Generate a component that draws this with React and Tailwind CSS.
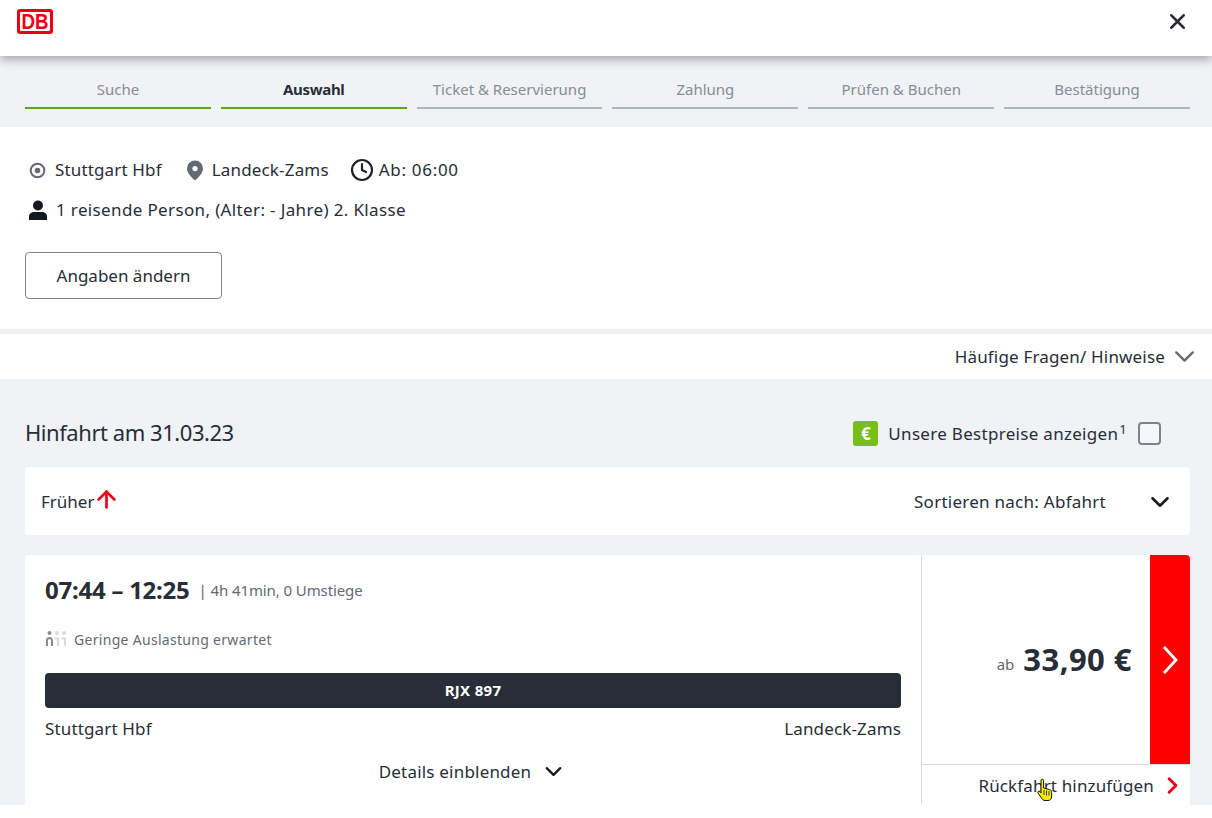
import { ChevronDown, ChevronRight, X, ArrowUp, Clock } from 'lucide-react'

const steps = [
  { label: 'Suche', done: true },
  { label: 'Auswahl', done: true, active: true },
  { label: 'Ticket & Reservierung' },
  { label: 'Zahlung' },
  { label: 'Prüfen & Buchen' },
  { label: 'Bestätigung' },
]

function DbLogo() {
  return (
    <div className="w-[36px] h-[25px] rounded-[3px] bg-[#ec0016] flex items-center justify-center">
      <div className="w-[30px] h-[19px] bg-white rounded-[1px] flex items-center justify-center">
        <span className="text-[#ec0016] font-bold text-[22px] leading-[19px] font-['Liberation_Sans',sans-serif] scale-x-[0.85]">DB</span>
      </div>
    </div>
  )
}

function Occupancy() {
  return (
    <svg width="22" height="18" viewBox="0 0 22 18">
      <circle cx="4.5" cy="3" r="2" fill="#878c96" />
      <path d="M1 16v-5.5a3.5 3.5 0 0 1 7 0V16H6v-5.5a1.5 1.5 0 0 0-3 0V16z" fill="#878c96" />
      <circle cx="12" cy="3" r="2" fill="#d7dce1" />
      <path d="M9.5 7.5h4.5V16h-2V9.5H9.5z" fill="#d7dce1" />
      <circle cx="19" cy="3" r="2" fill="#d7dce1" />
      <path d="M16.5 7.5H21V16h-2V9.5h-2.5z" fill="#d7dce1" />
    </svg>
  )
}

function Cursor() {
  return (
    <svg className="absolute left-[1036px] top-[778px]" width="18" height="24" viewBox="0 0 18 24">
      <path d="M5 2.5a1.3 1.3 0 0 1 2.6 0V10l6 1.5c1.5.5 2 1.5 2 3V19c0 2-1.5 3.5-3.5 3.5H9c-1.5 0-2.5-.8-3.2-2L2 15c-.8-1.4 1-2.6 2-1.4l1 1.2z" fill="#f5ec00" stroke="#111" strokeWidth="1" />
      <path d="M8 12v5M10.5 12.5v5M13 13v4.5" stroke="#111" strokeWidth="0.8" />
    </svg>
  )
}

export default function App() {
  return (
    <div className="relative h-[818px] bg-white overflow-hidden font-['Noto_Sans',sans-serif] text-[#282d37]">
      <div className="h-[805px] overflow-hidden bg-[#f0f3f5] flex flex-col">
        {/* Header */}
        <header className="relative z-10 h-[56px] shrink-0 bg-white shadow-[0_3px_10px_rgba(0,0,0,0.35)] flex items-start justify-between pl-[17px] pr-[22px]">
          <div className="mt-[9px]"><DbLogo /></div>
          <X className="mt-[9px] text-[#282d37]" size={25} strokeWidth={2.4} />
        </header>

        {/* Stepper */}
        <nav className="h-[71px] shrink-0 pl-[25px] pr-[22px] pt-[22px] flex gap-[10px]">
          {steps.map(s => (
            <div
              key={s.label}
              className={`flex-1 h-[31px] border-b-2 text-center text-[15px] leading-[23px] ${s.done ? 'border-[#63a615]' : 'border-[#afb4bb]'} ${s.active ? 'font-bold text-[#282d37] tracking-[-0.3px]' : 'text-[#878c96]'}`}
            >
              {s.label}
            </div>
          ))}
        </nav>

        {/* Search summary */}
        <section className="h-[202px] shrink-0 bg-white px-[25px] pt-[31px]">
          <div className="flex items-center h-[24px] text-[17px]">
            <svg className="ml-[4px] mr-[9px]" width="17" height="17" viewBox="0 0 17 17">
              <circle cx="8.5" cy="8.5" r="6.8" fill="none" stroke="#646973" strokeWidth="2" />
              <circle cx="8.5" cy="8.5" r="2.8" fill="#646973" />
            </svg>
            <span className="tracking-[0.15px]">Stuttgart Hbf</span>
            <svg className="ml-[24px] mr-[8px]" width="18" height="21" viewBox="0 0 18 21">
              <path fillRule="evenodd" d="M9 0.5a8 8 0 0 1 8 8c0 4.500-4.500 9-8 12c-3.500-3-8-7.500-8-12a8 8 0 0 1 8-8zm0 5.500a2.600 2.600 0 1 0 0 5.200a2.600 2.600 0 0 0 0-5.200z" fill="#646973" />
            </svg>
            <span className="tracking-[0.17px]">Landeck-Zams</span>
            <Clock className="ml-[21px] mr-[5px] text-[#1e2229]" size={24} strokeWidth={2.2} />
            <span className="tracking-[0.7px]">Ab: 06:00</span>
          </div>
          <div className="flex items-center h-[24px] mt-[16px] text-[17px]">
            <svg className="ml-[4px] mr-[9px]" width="18" height="21" viewBox="0 0 18 21">
              <circle cx="9" cy="5.500" r="5" fill="#131821" />
              <path d="M0 20v-3.500c0-3 2.500-4.500 5-4.500h8c2.500 0 5 1.500 5 4.500V20z" fill="#131821" />
            </svg>
            <span className="tracking-[0.36px]">1 reisende Person, (Alter: - Jahre) 2. Klasse</span>
          </div>
          <button className="mt-[30px] w-[197px] h-[47px] rounded-[4px] border border-[#7d828c] text-[17px] text-center">
            Angaben ändern
          </button>
        </section>

        <div className="h-[5px] shrink-0 bg-[#f0f1f2]" />

        {/* FAQ */}
        <div className="h-[45px] shrink-0 bg-white flex items-center justify-end pr-[11px] text-[17px]">
          <span className="tracking-[0.17px]">Häufige Fragen/ Hinweise</span>
          <ChevronDown className="ml-[3px] text-[#646973]" size={33} strokeWidth={1.7} />
        </div>

        {/* Results */}
        <main className="flex-1 pl-[25px] pr-[22px]">
          <div className="h-[88px] flex items-start justify-between pt-[37px]">
            <h2 className="text-[22px] leading-[32px] tracking-[-0.45px]">Hinfahrt am 31.03.23</h2>
            <div className="flex items-center mr-[29px] mt-[4px]">
              <div className="w-[25px] h-[25px] rounded-[3px] bg-[#78be14] text-white flex items-center justify-center text-[17px] font-bold">€</div>
              <span className="ml-[10px] mt-[1px] text-[17px] tracking-[0.3px]">Unsere Bestpreise anzeigen<sup className="text-[13px] ml-px">1</sup></span>
              <div className="ml-[11px] w-[23px] h-[23px] rounded-[4px] border-2 border-[#7d828c] bg-[#f5f6f8]" />
            </div>
          </div>

          <div className="h-[68px] rounded-[4px] bg-white flex items-center justify-between pl-[16px] pr-[15px] text-[17px]">
            <div className="flex items-center mt-[2px]">
              <span>Früher</span>
              <ArrowUp className="-mt-[6px] -ml-[1px] text-[#ec0016]" size={27} strokeWidth={2.4} />
            </div>
            <div className="flex items-center mt-[1px]">
              <span className="tracking-[0.26px]">Sortieren nach: Abfahrt</span>
              <ChevronDown className="ml-[39px] text-[#131821]" size={30} strokeWidth={2} />
            </div>
          </div>

          {/* Connection card */}
          <div className="mt-[20px] h-[260px] rounded-[4px] bg-white flex overflow-hidden">
            <div className="flex-1 px-[20px] pt-[20px]">
              <div className="flex items-center h-[30px]">
                <span className="text-[24px] font-bold leading-[30px] tracking-[-0.25px]">07:44 – 12:25</span>
                <span className="ml-[9px] text-[15px] text-[#646973] tracking-[-0.1px]">| 4h 41min, 0 Umstiege</span>
              </div>
              <div className="mt-[24px] flex items-center h-[20px] text-[14px] tracking-[0.3px] text-[#646973]">
                <Occupancy />
                <span className="ml-[7px]">Geringe Auslastung erwartet</span>
              </div>
              <div className="mt-[24px] h-[35px] rounded-[4px] bg-[#282d37] text-white flex items-center justify-center text-[15px] tracking-[0.3px] font-bold">RJX 897</div>
              <div className="mt-[9px] flex justify-between text-[17px] leading-[24px] tracking-[0.15px]">
                <span>Stuttgart Hbf</span>
                <span>Landeck-Zams</span>
              </div>
              <div className="mt-[17px] flex items-center justify-center text-[17px] leading-[24px] tracking-[0.2px]">
                <span>Details einblenden</span>
                <ChevronDown className="ml-[9px] text-[#131821]" size={27} strokeWidth={2} />
              </div>
            </div>

            <div className="w-[269px] shrink-0 border-l border-[#d7dce1] flex flex-col">
              <div className="h-[210px] shrink-0 flex border-b border-[#d7dce1]">
                <div className="flex-1 flex items-center justify-end pr-[18px]">
                  <span className="text-[15px] text-[#646973] mt-[10px] mr-[9px]">ab</span>
                  <span className="text-[31px] font-bold leading-none tracking-[0.45px]">33,90 €</span>
                </div>
                <div className="w-[40px] h-[209px] bg-[#ff0000] flex items-center justify-center">
                  <svg width="16" height="30" viewBox="0 0 16 30">
                    <path d="M2 2l12 13L2 28" fill="none" stroke="white" strokeWidth="2.800" />
                  </svg>
                </div>
              </div>
              <div className="flex-1 flex items-start justify-end pr-[4px] pt-[8px] text-[17px] leading-[26px]">
                <span className="tracking-[0.15px]">Rückfahrt hinzufügen</span>
                <ChevronRight className="ml-[5px] -mt-[1px] text-[#ec0016]" size={27} strokeWidth={2.6} />
              </div>
            </div>
          </div>
        </main>
      </div>
      <Cursor />
    </div>
  )
}
